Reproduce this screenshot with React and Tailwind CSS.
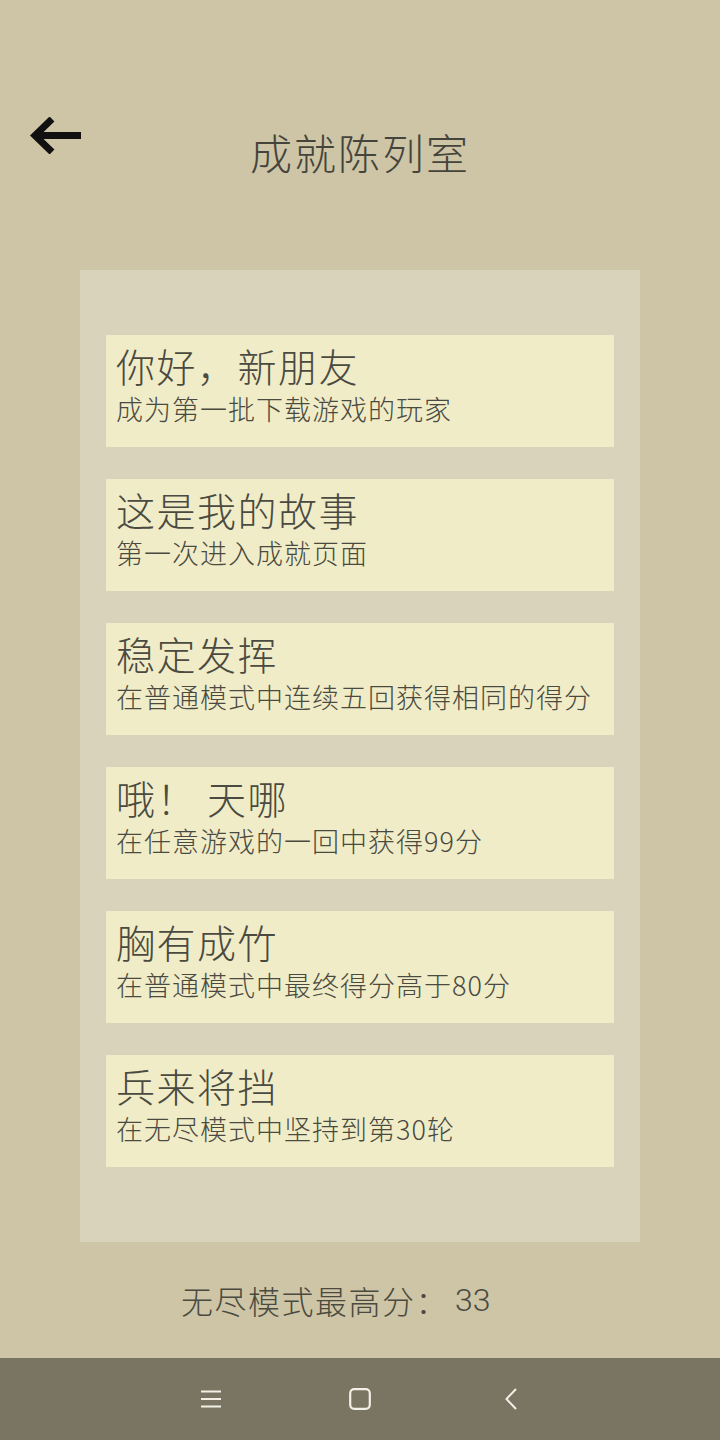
import React from "react";

const items = [
  ["你好，新朋友", "成为第一批下载游戏的玩家"],
  ["这是我的故事", "第一次进入成就页面"],
  ["稳定发挥", "在普通模式中连续五回获得相同的得分"],
  ["哦！ 天哪", "在任意游戏的一回中获得99分"],
  ["胸有成竹", "在普通模式中最终得分高于80分"],
  ["兵来将挡", "在无尽模式中坚持到第30轮"],
];

const font = { fontFamily: '"Noto Sans CJK SC", "Noto Sans", sans-serif' };

export default function App() {
  return (
    <div
      className="w-[720px] h-[1440px] bg-[#cdc5a6] flex flex-col text-[#4a4a40] font-light"
      style={font}
    >
      <div className="h-[270px] grid grid-cols-[1fr_auto_1fr] items-start pt-[117px]">
        <div className="pl-[29px]">
          <svg width="54" height="37" viewBox="0 0 54 37">
            <path d="M52 18.5 H8" stroke="#111" strokeWidth="7" fill="none" />
            <path d="M23 2 L6 18.5 L23 35" stroke="#111" strokeWidth="7" fill="none" strokeLinejoin="miter" />
          </svg>
        </div>
        <div className="text-[42px] leading-none mt-[14px] tracking-[2px] text-[#45443c]">成就陈列室</div>
        <div />
      </div>
      <div className="mx-[80px] bg-[#d9d3bb] pt-[65px] pb-[75px] px-[26px] flex flex-col gap-[32px]">
        {items.map(([t, s]) => (
          <div key={t} className="h-[112px] bg-[#f0ecc8] pl-[10px] pt-[8px] flex flex-col">
            <div className="text-[39px] leading-[45px] tracking-[1.5px] whitespace-pre">{t}</div>
            <div className="text-[27px] leading-[34px] tracking-[1px] mt-[4px]">{s}</div>
          </div>
        ))}
      </div>
      <div className="flex-1 flex items-center pl-[181px]">
        <span className="text-[32px] leading-none tracking-[1.5px]">无尽模式最高分：</span>
        <span className="text-[32px] leading-none ml-[6px]" style={{ fontFamily: '"Roboto", "Noto Sans", sans-serif' }}>33</span>
      </div>
      <div className="h-[82px] bg-[#7a7563] flex items-center">
        <div className="w-[720px] flex items-center">
          <div className="ml-[201px]">
            <svg width="20" height="18" viewBox="0 0 20 18">
              <path d="M0 1.5 H20 M0 9 H20 M0 16.5 H20" stroke="#f2efe6" strokeWidth="2" />
            </svg>
          </div>
          <div className="ml-[128px]">
            <svg width="22" height="22" viewBox="0 0 22 22">
              <rect x="1.2" y="1.2" width="19.6" height="19.6" rx="4" stroke="#f2efe6" strokeWidth="2.2" fill="none" />
            </svg>
          </div>
          <div className="ml-[134px]">
            <svg width="12" height="22" viewBox="0 0 12 22">
              <path d="M11 1 L1.5 11 L11 21" stroke="#f2efe6" strokeWidth="2" fill="none" />
            </svg>
          </div>
        </div>
      </div>
    </div>
  );
}
